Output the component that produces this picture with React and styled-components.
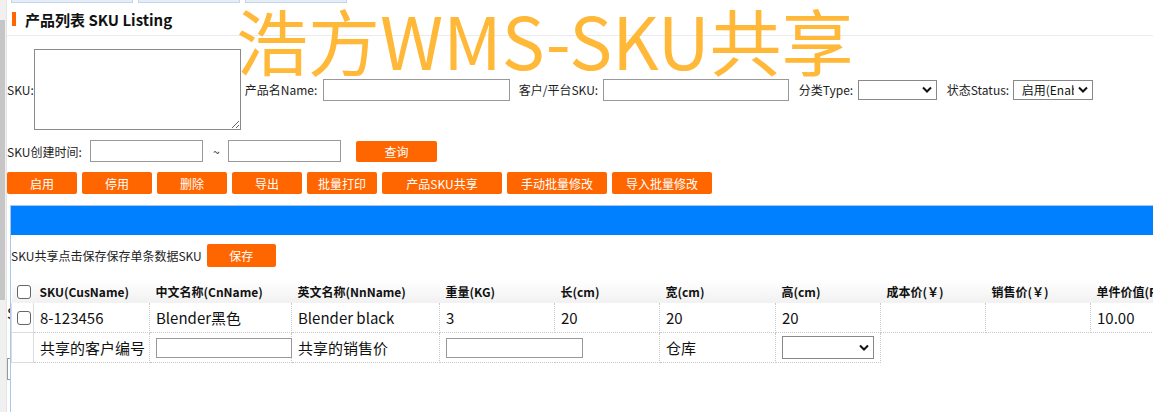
import React from "react";
import styled, { createGlobalStyle } from "styled-components";

const GlobalStyle = createGlobalStyle`
  html, body {
    margin: 0;
    padding: 0;
    background: #fff;
  }
  body {
    font-family: "Noto Sans CJK SC", "Noto Sans", sans-serif;
    font-size: 12px;
    color: #222;
  }
`;

const Frame = styled.div`
  position: relative;
  display: flex;
  width: 1153px;
  height: 412px;
  overflow: hidden;
  background: #fff;
`;

const Scrollbar = styled.div`
  width: 6px;
  flex: none;
  background: #f0f0f0;
  border-right: 1px solid #e4e4e4;
`;

const Thumb = styled.div`
  margin-top: 20px;
  width: 5px;
  height: 280px;
  background: #c6c6c6;
`;

const Page = styled.div`
  flex: 1;
  min-width: 0;
`;

const TabStrip = styled.div`
  display: flex;
  gap: 5px;
  height: 3px;
  padding-left: 4px;
`;

const Tab = styled.div`
  width: ${(p) => p.w}px;
  background: #e4edf8;
  border: 1px solid #c5d5ea;
  border-top: none;
  box-sizing: border-box;
`;

const TitleRow = styled.div`
  display: flex;
  align-items: center;
  gap: 9px;
  height: 32px;
  padding-left: 5px;
  border-bottom: 1px solid #ebebeb;
`;

const TitleMark = styled.span`
  width: 4px;
  height: 14px;
  flex: none;
  background: #ff6600;
`;

const Title = styled.h1`
  margin: 0;
  font-size: 15px;
  font-weight: bold;
  color: #111;
`;

const Watermark = styled.div`
  position: absolute;
  left: 236px;
  top: 3px;
  font-size: 72px;
  line-height: 1;
  color: #ffb838;
  white-space: nowrap;
  pointer-events: none;
  z-index: 5;
`;

const Filters = styled.div`
  display: flex;
  flex-direction: column;
  gap: 10px;
  margin-top: 13px;
`;

const FilterRow = styled.div`
  display: flex;
  align-items: center;
`;

const Field = styled.div`
  display: flex;
  align-items: center;
  margin-left: ${(p) => p.ml || 0}px;
`;

const Label = styled.label`
  min-width: ${(p) => p.w}px;
  flex: none;
  white-space: nowrap;
  font-size: 12px;
  color: #222;
`;

const TextArea = styled.textarea`
  width: 207px;
  height: 81px;
  box-sizing: border-box;
  border: 1px solid #8a8a8a;
  resize: both;
  margin: 0;
  font-family: inherit;
`;

const Input = styled.input`
  width: ${(p) => p.w}px;
  height: ${(p) => p.h || 22}px;
  box-sizing: border-box;
  border: 1px solid #999;
  margin: 0;
  padding: 0 3px;
  font-family: inherit;
`;

const SelectWrap = styled.div`
  position: relative;
  width: ${(p) => p.w}px;
  height: ${(p) => p.h}px;
`;

const Select = styled.select`
  appearance: none;
  width: 100%;
  height: 100%;
  box-sizing: border-box;
  border: 1px solid #888;
  background: #fff;
  margin: 0;
  padding: 0 18px 0 8px;
  font-family: inherit;
  font-size: 12px;
  color: #111;
`;

const Chevron = styled.svg`
  position: absolute;
  right: 5px;
  top: 50%;
  margin-top: -4px;
  width: 10px;
  height: 8px;
  pointer-events: none;
`;

const Tilde = styled.span`
  width: 25px;
  padding-left: 10px;
  box-sizing: border-box;
  font-size: 12px;
`;

const OrangeButton = styled.button`
  width: ${(p) => p.w}px;
  height: ${(p) => p.h || 22}px;
  margin-left: ${(p) => p.ml || 0}px;
  flex: none;
  border: none;
  border-radius: 2px;
  background: #ff6600;
  color: #fff;
  font-family: inherit;
  font-size: 12px;
  padding: 0;
  cursor: pointer;
`;

const ButtonBar = styled.div`
  display: flex;
  gap: 5px;
  margin-top: 10px;
`;

const Underlay = styled.div`
  margin-top: 108px;
  font-size: 15px;
  color: #222;
`;

const UnderSelect = styled.div`
  margin-top: 35px;
  width: 60px;
  height: 20px;
  border: 1px solid #999;
`;

const Dialog = styled.div`
  position: absolute;
  left: 10px;
  top: 205px;
  width: 1300px;
  height: 240px;
  background: #fff;
  border: 1px solid #a8c7ef;
  z-index: 3;
`;

const DialogHead = styled.div`
  height: 29px;
  background: #0080ff;
`;

const SaveRow = styled.div`
  display: flex;
  align-items: center;
  margin-top: 9px;
  font-size: 12px;
  color: #222;
`;

const Table = styled.table`
  margin-top: 13px;
  border-collapse: collapse;
  table-layout: fixed;
  width: 1184px;
`;

const Th = styled.th`
  height: 23px;
  padding: 0 0 0 ${(p) => (p.check ? 5 : 6)}px;
  text-align: left;
  font-size: 12px;
  font-weight: bold;
  color: #111;
  background: linear-gradient(#ffffff, #f1f1f1);
  white-space: nowrap;
  overflow: hidden;
`;

const Td = styled.td`
  height: 29px;
  padding: 0 0 0 ${(p) => (p.check ? 5 : 6)}px;
  font-size: 15px;
  color: #111;
  white-space: nowrap;
  overflow: ${(p) => (p.free ? "visible" : "hidden")};
  border: 1px ${(p) => (p.check ? "solid #dddddd" : "dotted #c8c8c8")};
  border-top: none;
  border-left: ${(p) => (p.check ? "1px solid #dddddd" : "none")};
  vertical-align: middle;
`;

const Check = styled.input.attrs({ type: "checkbox" })`
  appearance: none;
  display: block;
  width: 14px;
  height: 14px;
  margin: 0;
  border: 1px solid #666;
  border-radius: 3px;
  background: #fff;
`;

function Dropdown({ w, h, children }) {
  return (
    <SelectWrap w={w} h={h}>
      <Select>{children}</Select>
      <Chevron viewBox="0 0 10 8">
        <path d="M1 1.5 L5 5.5 L9 1.5" fill="none" stroke="#111" strokeWidth="2" />
      </Chevron>
    </SelectWrap>
  );
}

const columns = [
  "SKU(CusName)",
  "中文名称(CnName)",
  "英文名称(NnName)",
  "重量(KG)",
  "长(cm)",
  "宽(cm)",
  "高(cm)",
  "成本价(￥)",
  "销售价(￥)",
  "单件价值(RMB)",
];

const widths = [22, 116, 142, 148, 115, 105, 116, 105, 105, 105, 105];

const row = ["8-123456", "Blender黑色", "Blender black", "3", "20", "20", "20", "", "", "10.00"];

const actions = [
  ["启用", 70],
  ["停用", 70],
  ["删除", 70],
  ["导出", 70],
  ["批量打印", 70],
  ["产品SKU共享", 120],
  ["手动批量修改", 100],
  ["导入批量修改", 100],
];

export default function App() {
  return (
    <>
      <GlobalStyle />
      <Frame>
        <Scrollbar>
          <Thumb />
        </Scrollbar>
        <Page>
          <TabStrip>
            <Tab w={122} />
            <Tab w={102} />
            <Tab w={102} />
          </TabStrip>
          <TitleRow>
            <TitleMark />
            <Title>产品列表 SKU Listing</Title>
          </TitleRow>
          <Filters>
            <FilterRow>
              <Field>
                <Label w={26}>SKU:</Label>
                <TextArea />
              </Field>
              <Field ml={4}>
                <Label w={78}>产品名Name:</Label>
                <Input w={187} />
              </Field>
              <Field ml={9}>
                <Label w={84}>客户/平台SKU:</Label>
                <Input w={186} />
              </Field>
              <Field ml={10}>
                <Label w={59}>分类Type:</Label>
                <Dropdown w={79} h={20}>
                  <option></option>
                </Dropdown>
              </Field>
              <Field ml={10}>
                <Label w={66}>状态Status:</Label>
                <Dropdown w={80} h={20}>
                  <option>启用(Enable)</option>
                  <option>停用(Disable)</option>
                </Dropdown>
              </Field>
            </FilterRow>
            <FilterRow>
              <Label w={83}>SKU创建时间:</Label>
              <Input w={113} />
              <Tilde>~</Tilde>
              <Input w={113} />
              <OrangeButton w={81} h={21} ml={15}>
                查询
              </OrangeButton>
            </FilterRow>
          </Filters>
          <ButtonBar>
            {actions.map(([text, w]) => (
              <OrangeButton key={text} w={w}>
                {text}
              </OrangeButton>
            ))}
          </ButtonBar>
          <Underlay>
            SKU
            <UnderSelect />
          </Underlay>
        </Page>

        <Watermark>浩方WMS-SKU共享</Watermark>

        <Dialog>
          <DialogHead />
          <SaveRow>
            SKU共享点击保存保存单条数据SKU
            <OrangeButton w={69} h={23} ml={5}>
              保存
            </OrangeButton>
          </SaveRow>
          <Table>
            <colgroup>
              {widths.map((w, i) => (
                <col key={i} style={{ width: w }} />
              ))}
            </colgroup>
            <thead>
              <tr>
                <Th check>
                  <Check />
                </Th>
                {columns.map((c) => (
                  <Th key={c}>{c}</Th>
                ))}
              </tr>
            </thead>
            <tbody>
              <tr>
                <Td check>
                  <Check />
                </Td>
                {row.map((v, i) => (
                  <Td key={i}>{v}</Td>
                ))}
              </tr>
              <tr>
                <Td check />
                <Td>共享的客户编号</Td>
                <Td free>
                  <Input w={136} h={20} />
                </Td>
                <Td>共享的销售价</Td>
                <Td colSpan={2}>
                  <Input w={137} h={20} />
                </Td>
                <Td>仓库</Td>
                <Td>
                  <Dropdown w={92} h={23}>
                    <option></option>
                  </Dropdown>
                </Td>
              </tr>
            </tbody>
          </Table>
        </Dialog>
      </Frame>
    </>
  );
}
